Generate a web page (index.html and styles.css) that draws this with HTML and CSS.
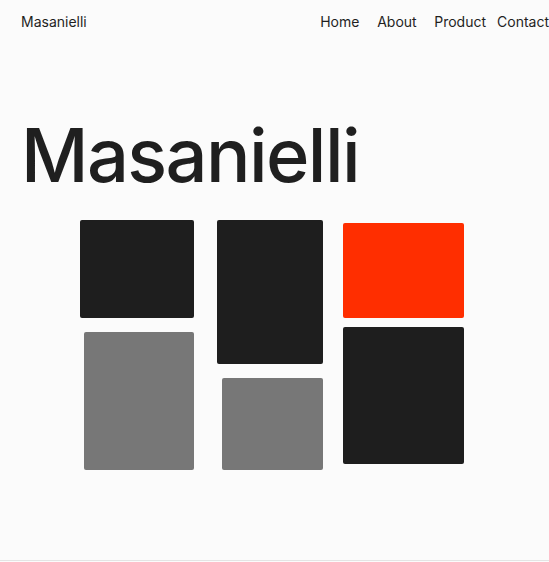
FILE: index.html
```html
<!DOCTYPE html>
<html lang="en">
<head>
<meta charset="utf-8">
<title>Masanielli</title>
<link rel="stylesheet" href="styles.css">
</head>
<body>
<div class="page">
  <header class="header">
    <div class="brand">Masanielli</div>
    <nav>
      <ul class="nav">
        <li><a href="#">Home</a></li>
        <li><a href="#">About</a></li>
        <li><a href="#">Product</a></li>
        <li><a href="#">Contact</a></li>
      </ul>
    </nav>
  </header>
  <main>
    <h1 class="title">Masanielli</h1>
    <div class="art">
      <div class="col col-1">
        <div class="tile dark t1"></div>
        <div class="tile gray t2"></div>
      </div>
      <div class="col col-2">
        <div class="tile dark t3"></div>
        <div class="tile gray t4"></div>
      </div>
      <div class="col col-3">
        <div class="tile red t5"></div>
        <div class="tile dark t6"></div>
      </div>
    </div>
  </main>
</div>
</body>
</html>
```

FILE: styles.css
```css
html, body {
  margin: 0;
  padding: 0;
  background: #fbfbfb;
  overflow: hidden;
}
body {
  font-family: Inter, "Liberation Sans", sans-serif;
  color: #1f1f1f;
}
.page {
  height: 561px;
  box-sizing: border-box;
  border-bottom: 1px solid #e4e4e4;
  overflow: hidden;
}
.header {
  height: 42px;
  display: flex;
  align-items: center;
  justify-content: space-between;
  padding-left: 21px;
}
.brand {
  font-size: 14px;
}
.nav {
  list-style: none;
  margin: 0 -11px 0 0;
  padding: 0;
  display: flex;
  flex-shrink: 0;
}
.nav li {
  min-width: 46px;
  padding-right: 11px;
  font-size: 14px;
}
.nav a {
  color: #1f1f1f;
  text-decoration: none;
}
.title {
  margin: 76px 0 0;
  padding-left: 21px;
  font-size: 74px;
  line-height: 74px;
  font-weight: 500;
  letter-spacing: -1.6px;
}
.art {
  display: grid;
  grid-template-columns: 117px 109px 121px;
  column-gap: 20px;
  padding-left: 77px;
  margin-top: 28px;
}
.col {
  display: flex;
  flex-direction: column;
  align-items: flex-end;
  gap: 14px;
}
.col-3 {
  gap: 9px;
  padding-top: 3px;
}
.tile {
  border-radius: 2px;
}
.dark { background: #1e1e1e; }
.gray { background: #777777; }
.red { background: #ff2e00; }
.t1 { width: 114px; height: 98px; }
.t2 { width: 110px; height: 138px; }
.t3 { width: 106px; height: 144px; }
.t4 { width: 101px; height: 92px; }
.t5 { width: 121px; height: 95px; }
.t6 { width: 121px; height: 137px; }
```
